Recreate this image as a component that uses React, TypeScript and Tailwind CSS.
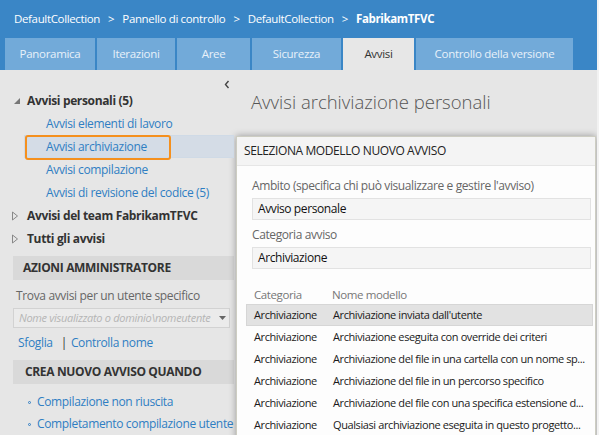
import React from "react";

const tabs = [
  { label: "Panoramica", w: "w-[90px]" },
  { label: "Iterazioni", w: "w-[78px]" },
  { label: "Aree", w: "w-[73px]" },
  { label: "Sicurezza", w: "w-[89px]" },
  { label: "Avvisi", w: "w-[71px]", active: true },
  { label: "Controllo della versione", w: "w-[157px]" },
];

const rows = [
  "Archiviazione inviata dall'utente",
  "Archiviazione eseguita con override dei criteri",
  "Archiviazione del file in una cartella con un nome sp...",
  "Archiviazione del file in un percorso specifico",
  "Archiviazione del file con una specifica estensione d...",
  "Qualsiasi archiviazione eseguita in questo progetto...",
];

function TriDown() {
  return (
    <svg width="8" height="8" viewBox="0 0 8 8" className="shrink-0">
      <path d="M7 1 L7 7 L1 7 Z" fill="#777" />
    </svg>
  );
}
function TriRight() {
  return (
    <svg width="8" height="10" viewBox="0 0 8 10" className="shrink-0">
      <path d="M1.5 1 L6.5 5 L1.5 9 Z" fill="none" stroke="#888" strokeWidth="1" />
    </svg>
  );
}

export default function App() {
  return (
    <div className="w-[599px] h-[435px] overflow-hidden bg-[#e6e6e6] font-['Open_Sans',sans-serif] text-[12px] border-r-2 border-[#f2f2f2]">
      <header className="bg-[#3a86c6] h-[70px] flex flex-col">
        <div className="h-[38px] flex items-center pl-[14px] text-white text-[11.5px] tracking-[-0.35px] whitespace-nowrap">
          <span>DefaultCollection</span>
          <span className="mx-[8px]">&gt;</span>
          <span>Pannello di controllo</span>
          <span className="mx-[8px]">&gt;</span>
          <span>DefaultCollection</span>
          <span className="mx-[8px]">&gt;</span>
          <span className="font-bold">FabrikamTFVC</span>
        </div>
        <div className="flex gap-[2px] pl-[5px] h-[32px]">
          {tabs.map((t) => (
            <div
              key={t.label}
              className={`${t.w} flex items-center justify-center text-[11.5px] tracking-[-0.3px] whitespace-nowrap ${
                t.active ? "bg-[#e7e7e7] text-[#333]" : "bg-[#72aad9] text-[#e8f1fa]"
              }`}
            >
              {t.label}
            </div>
          ))}
        </div>
      </header>
      <div className="flex h-[365px]">
        <aside className="w-[234px] shrink-0 flex flex-col tracking-[-0.35px] whitespace-nowrap [&>*]:shrink-0">
          <div className="h-[19px] flex justify-end items-end pr-[4px]">
            <svg width="6" height="9" viewBox="0 0 6 9">
              <path d="M4.5 1 L1.5 4.5 L4.5 8" fill="none" stroke="#444" strokeWidth="1.4" />
            </svg>
          </div>
          <div className="h-[23px] flex items-center pl-[13px] gap-[6px] font-bold text-[#333]">
            <TriDown />
            <span>Avvisi personali (5)</span>
          </div>
          <div className="h-[23px] flex items-center pl-[46px] text-[#2f7ec3]">Avvisi elementi di lavoro</div>
          <div className="h-[23px] ml-[24px] relative flex items-center bg-[#d4dce6] border border-[#cfdae6]">
            <div className="absolute left-[0px] top-[-1px] w-[146px] h-[25px] border-[2.5px] border-[#f5901e] rounded-[3px]" />
            <span className="pl-[21px] text-[#2f7ec3]">Avvisi archiviazione</span>
          </div>
          <div className="h-[23px] flex items-center pl-[46px] text-[#2f7ec3]">Avvisi compilazione</div>
          <div className="h-[23px] flex items-center pl-[46px] text-[#2f7ec3]">Avvisi di revisione del codice (5)</div>
          <div className="h-[23px] flex items-center pl-[11px] gap-[8px] font-bold text-[#333]">
            <TriRight />
            <span>Avvisi del team FabrikamTFVC</span>
          </div>
          <div className="h-[23px] flex items-center pl-[11px] gap-[8px] font-bold text-[#333]">
            <TriRight />
            <span>Tutti gli avvisi</span>
          </div>
          <div className="mt-[6px] ml-[13px] h-[24px] bg-[#d9d9d9] flex items-center pl-[10px] font-bold text-[#333]">
            AZIONI AMMINISTRATORE
          </div>
          <div className="h-[27px] flex items-end pl-[16px] pb-[2px] text-[#666]">Trova avvisi per un utente specifico</div>
          <div className="ml-[13px] mt-[1px] w-[217px] h-[20px] border border-[#d2d2d2] bg-[#ebebeb] flex items-center pl-[5px] pr-[3px] italic text-[#b5b5b5] text-[11px] tracking-[-0.3px]">
            <span className="flex-1 whitespace-nowrap overflow-hidden">Nome visualizzato o dominio\nomeutente</span>
            <svg width="7" height="5" viewBox="0 0 7 5"><path d="M0 0 L7 0 L3.5 4 Z" fill="#666" /></svg>
          </div>
          <div className="h-[30px] flex items-center pl-[18px] text-[#2f7ec3]">
            <span>Sfoglia</span>
            <span className="text-[#333] ml-[8px] mr-[4px]">|</span>
            <span>Controlla nome</span>
          </div>
          <div className="mt-[2px] ml-[13px] h-[24px] bg-[#d9d9d9] flex items-center pl-[12px] font-bold text-[#333]">
            CREA NUOVO AVVISO QUANDO
          </div>
          <div className="mt-[7px] h-[22px] flex items-center pl-[28px] gap-[6px] text-[#2f7ec3]">
            <span className="w-[3px] h-[3px] border border-[#2f7ec3] rounded-full" />
            <span>Compilazione non riuscita</span>
          </div>
          <div className="h-[22px] flex items-center pl-[28px] gap-[6px] text-[#2f7ec3]">
            <span className="w-[3px] h-[3px] border border-[#2f7ec3] rounded-full" />
            <span>Completamento compilazione utente</span>
          </div>
        </aside>
        <main className="flex-1 flex flex-col pt-[19px] tracking-[-0.4px] [&>*]:shrink-0">
          <div className="h-[26px] pl-[17px] text-[18.5px] text-[#555] font-light flex items-center tracking-[0px]">
            Avvisi archiviazione personali
          </div>
          <div className="mt-[21px] ml-[2px] mr-[1px] h-[320px] border border-[#cdcdc2] bg-[#fdfdfd] shadow-[0_0_7px_rgba(0,0,0,0.35)]">
            <div className="h-[29px] bg-[#f4f4f4] border-b border-[#e6e6e6] flex items-center pl-[7px] text-[#222]">
              SELEZIONA MODELLO NUOVO AVVISO
            </div>
            <div className="pl-[15px] pr-[4px]">
              <div className="h-[32px] flex items-end pb-[3px] text-[#666]">Ambito (specifica chi può visualizzare e gestire l'avviso)</div>
              <div className="h-[22px] bg-[#f5f5f5] border border-[#e2e2e2] flex items-center pl-[5px] text-[#111]">Avviso personale</div>
              <div className="h-[27px] flex items-end pb-[3px] text-[#666]">Categoria avviso</div>
              <div className="h-[22px] bg-[#f5f5f5] border border-[#e2e2e2] flex items-center pl-[5px] text-[#111]">Archiviazione</div>
            </div>
            <div className="pl-[9px] pr-[2px] mt-[16px] text-[11px]">
              <div className="h-[19px] flex items-center text-[#777] text-[11.5px]">
                <span className="w-[86px] pl-[8px]">Categoria</span>
                <span>Nome modello</span>
              </div>
              {rows.map((r, i) => (
                <div
                  key={r}
                  className={`h-[22px] flex items-center text-[#1a1a1a] whitespace-nowrap ${
                    i === 0 ? "bg-[#e2e2e2] border border-[#d6d6d6]" : "border border-transparent"
                  }`}
                >
                  <span className="w-[86px] pl-[7px]">Archiviazione</span>
                  <span>{r}</span>
                </div>
              ))}
            </div>
          </div>
        </main>
      </div>
    </div>
  );
}
